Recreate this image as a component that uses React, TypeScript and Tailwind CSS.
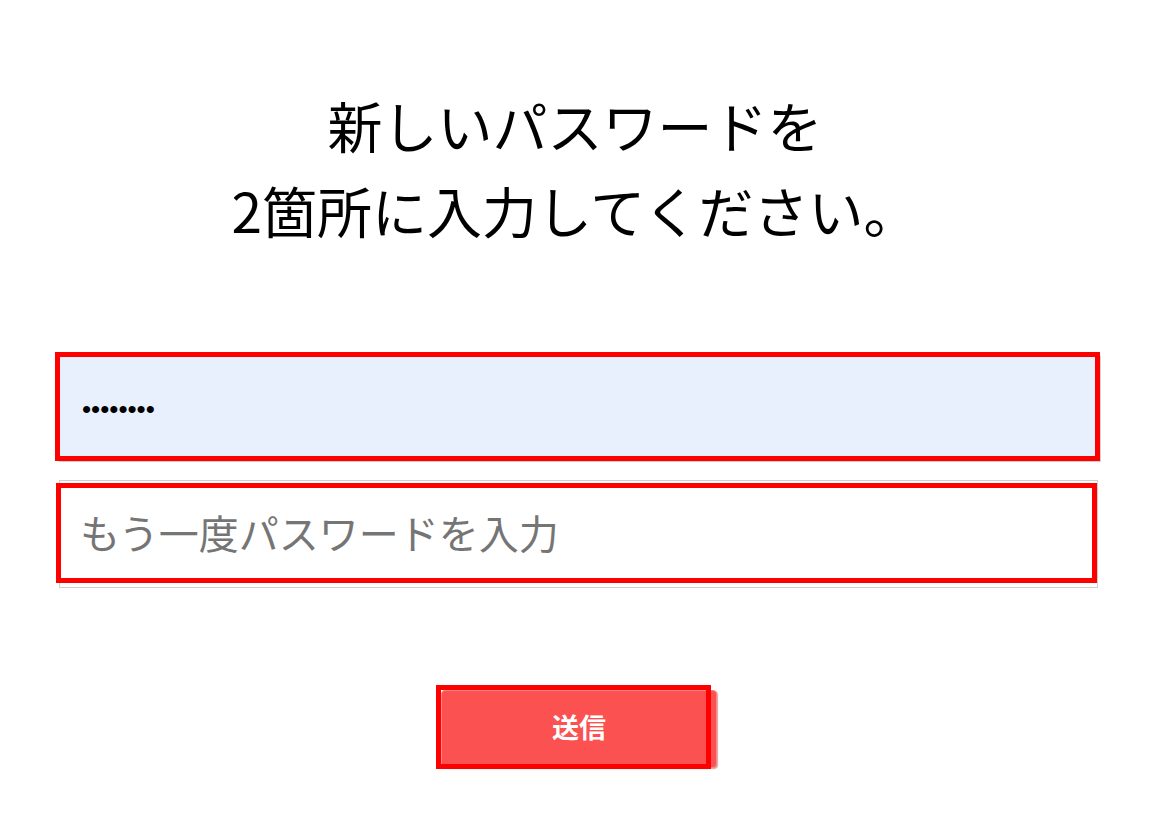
import React from "react";

export default function App() {
  return (
    <div
      className="w-[1150px] min-h-[821px] bg-white flex flex-col"
      style={{ fontFamily: '"Noto Sans CJK JP", "Noto Sans", sans-serif' }}
    >
      <h1 className="pt-[82px] text-center text-[55px] leading-[85px] font-normal text-black">
        新しいパスワードを
        <br />
        2箇所に入力してください。
      </h1>

      <div className="mt-[104px] ml-[59px] flex flex-col">
        <div className="relative w-[1042px] h-[106px]">
          <input
            type="password"
            readOnly
            value="abcdefgh"
            className="w-full h-full bg-[#e8f0fe] border border-[#d0d0d0] pl-[22px] text-[26px] text-black outline-none"
            style={{ fontFamily: '"Liberation Sans", Arial, sans-serif' }}
          />
          <span className="pointer-events-none absolute left-[-4px] top-[-4px] w-[1045px] h-[109px] border-[5px] border-[#ff0000]" />
        </div>

        <div className="relative mt-[18px] w-[1039px] h-[108px]">
          <input
            type="password"
            placeholder="もう一度パスワードを入力"
            className="w-full h-full bg-white border border-[#cfcfcf] pl-[20px] pb-[5px] text-[40px] text-black placeholder:text-[#757575] outline-none"
          />
          <span className="pointer-events-none absolute left-[-3px] top-[3px] w-[1041px] h-[100px] border-[5px] border-[#ff0000]" />
        </div>

        <div className="relative mt-[102px] ml-[382px] w-[276px] h-[78px]">
          <button className="w-full h-full pb-[6px] rounded-[4px] bg-[#fb5151] border border-[#ff8383] shadow-[1px_1px_1px_rgba(150,0,0,0.35)] text-white text-[27px] font-bold leading-none">
            送信
          </button>
          <span className="pointer-events-none absolute left-[-5px] top-[-5px] w-[275px] h-[84px] border-[5px] border-[#ff0000]" />
        </div>
      </div>
    </div>
  );
}
